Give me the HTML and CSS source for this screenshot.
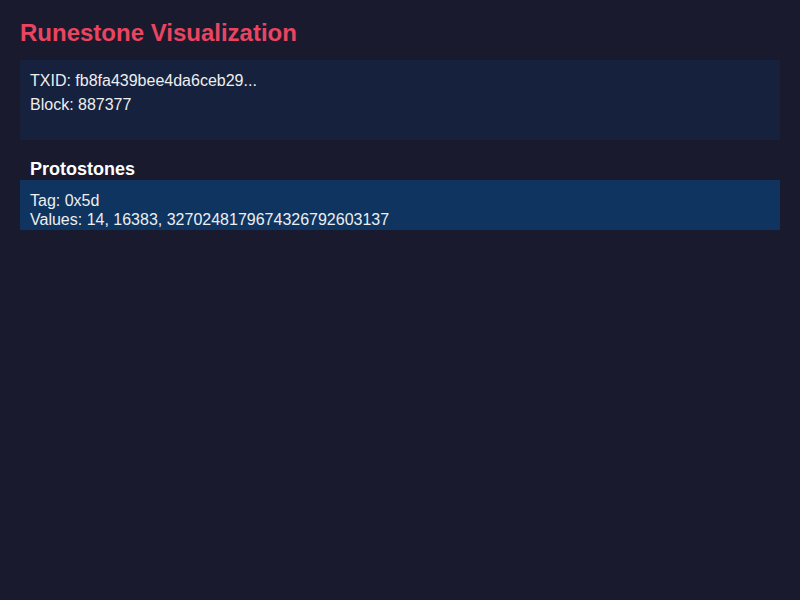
FILE: index.html
```html
<!DOCTYPE html>
<html>
<head>
<meta charset="utf-8">
<title>Runestone Visualization</title>
<link rel="stylesheet" href="styles.css">
</head>
<body>
  <h1 class="title">Runestone Visualization</h1>
  <div class="card">
    <div class="row">TXID: fb8fa439bee4da6ceb29...</div>
    <div class="row">Block: 887377</div>
  </div>
  <h3 class="section-title">Protostones</h3>
  <div class="protostone">
    <div class="line">Tag: 0x5d</div>
    <div class="line">Values: 14, 16383, 3270248179674326792603137</div>
  </div>
</body>
</html>
```

FILE: styles.css
```css
html, body {
  margin: 0;
  background: #1a1a2e;
}
body {
  padding: 20px;
  font-family: "Liberation Sans", Arial, sans-serif;
  color: #eeeeee;
  font-size: 16px;
}
.title {
  margin: 0 0 14px;
  font-size: 24px;
  font-weight: bold;
  color: #e94560;
  line-height: 26px;
}
.card {
  background: #16213e;
  padding: 10px 10px 22px;
}
.row {
  line-height: 22px;
  margin-bottom: 2px;
}
.section-title {
  margin: 19px 0 0;
  padding-left: 10px;
  font-size: 18px;
  line-height: 21px;
  color: #ffffff;
}
.protostone {
  background: #0f3460;
  padding: 11px 10px 1px;
}
.line {
  line-height: 19px;
}
```
